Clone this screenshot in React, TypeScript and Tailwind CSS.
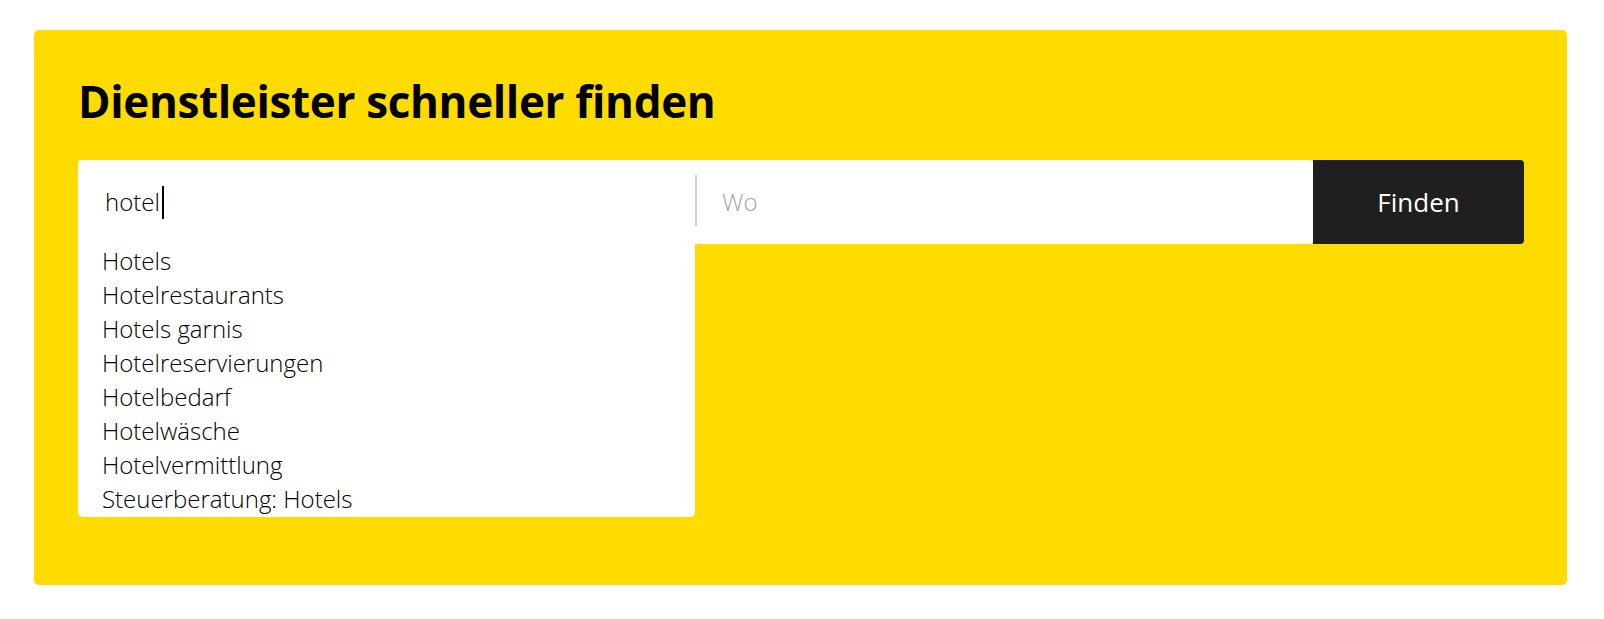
import React from "react";

const suggestions = [
  "Hotels",
  "Hotelrestaurants",
  "Hotels garnis",
  "Hotelreservierungen",
  "Hotelbedarf",
  "Hotelwäsche",
  "Hotelvermittlung",
  "Steuerberatung: Hotels",
];

export default function App() {
  return (
    <div className="min-h-[619px] bg-white pt-[30px] pl-[34px] pr-[37px] font-['Open_Sans',sans-serif]">
      <div className="h-[555px] rounded-[5px] bg-[#ffdc00] pl-[44px] pr-[43px] pt-[45px]">
        <h1 className="text-[44px] leading-[52px] font-bold tracking-[-0.35px] text-black">
          Dienstleister schneller finden
        </h1>
        <div className="relative mt-[33px] grid h-[84px] grid-cols-[617px_618px_211px]">
          <div className="flex items-center rounded-tl-[4px] bg-white pl-[27px]">
            <span className="text-[24px] font-light text-black">hotel</span>
            <span className="ml-[2px] h-[33px] w-[2px] bg-black" />
          </div>
          <div className="flex items-center rounded-r-[4px] bg-white">
            <div className="-mt-[3px] h-[51px] w-[2px] bg-[#d2d2d2]" />
            <span className="pl-[25px] text-[24px] font-light text-[#a3a3a3]">Wo</span>
          </div>
          <button className="flex items-center justify-center rounded-r-[4px] bg-[#1f1f1f] text-[26px] text-white">
            Finden
          </button>
          <ul className="absolute left-0 top-[84px] w-[617px] rounded-b-[5px] bg-white pb-[1px]">
            {suggestions.map((s) => (
              <li key={s} className="pl-[24px] text-[24px] leading-[34px] font-light text-black">
                {s}
              </li>
            ))}
          </ul>
        </div>
      </div>
    </div>
  );
}
